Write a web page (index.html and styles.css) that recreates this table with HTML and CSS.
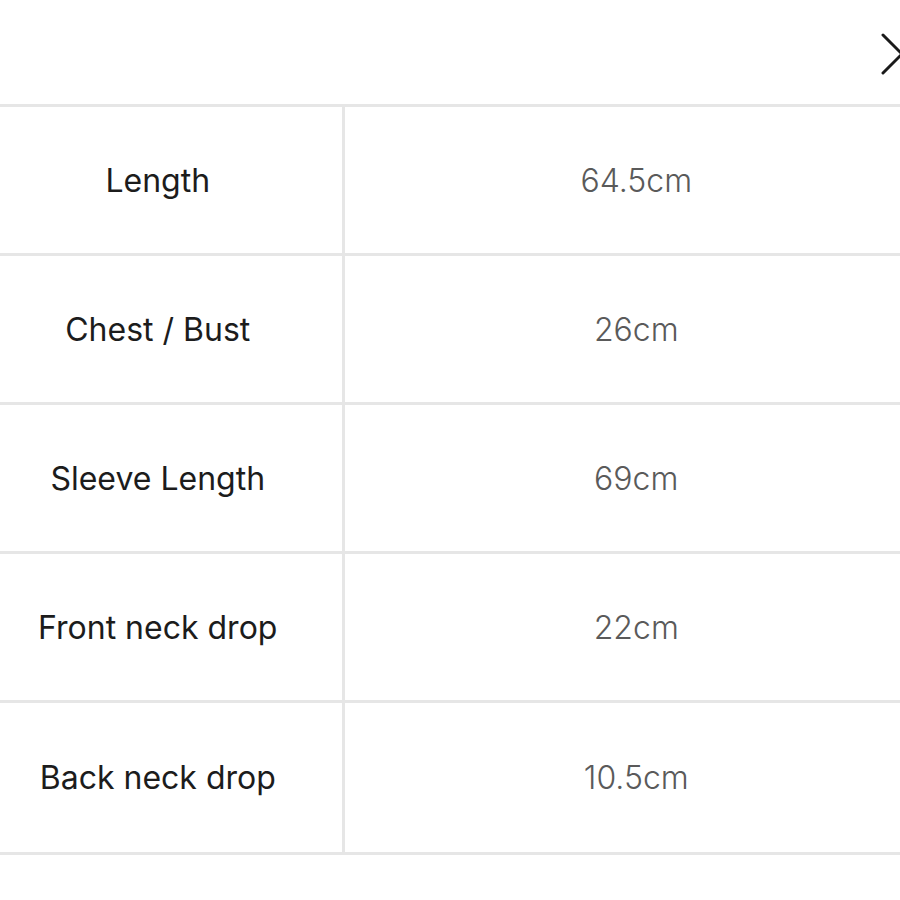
FILE: index.html
```html
<!DOCTYPE html>
<html lang="en">
<head>
    <meta charset="UTF-8">
    <meta name="viewport" content="width=device-width, initial-scale=1.0">
    <title>Size Chart</title>
    <link rel="stylesheet" href="styles.css">
</head>
<body>
    <div class="page">
        <div class="top-bar">
            <svg class="close-icon" width="30" height="44" viewBox="0 0 30 44">
                <path d="M2 2 L21 21 L2 40" fill="none" stroke="#1a1a1a" stroke-width="3" stroke-linecap="round" stroke-linejoin="round"/>
            </svg>
        </div>

        <table class="size-table">
            <tr>
                <td class="label">Length</td>
                <td class="value">64.5cm</td>
            </tr>
            <tr>
                <td class="label">Chest / Bust</td>
                <td class="value">26cm</td>
            </tr>
            <tr>
                <td class="label">Sleeve Length</td>
                <td class="value">69cm</td>
            </tr>
            <tr>
                <td class="label">Front neck drop</td>
                <td class="value">22cm</td>
            </tr>
            <tr class="last">
                <td class="label">Back neck drop</td>
                <td class="value">10.5cm</td>
            </tr>
        </table>
    </div>
</body>
</html>
```

FILE: styles.css
```css
/* Reset CSS */
* {
    margin: 0;
    padding: 0;
    box-sizing: border-box;
}

html, body {
    width: 900px;
    height: 900px;
    overflow: hidden;
    background-color: #fff;
}

body {
    font-family: Inter, "Noto Sans", sans-serif;
}

.page {
    width: 900px;
}

.top-bar {
    height: 104px;
    display: flex;
    justify-content: flex-end;
    padding-top: 33px;
}

.close-icon {
    display: block;
    margin-right: -11px;
}

.size-table {
    border-collapse: collapse;
    margin-left: -26px;
    width: 954px;
    table-layout: fixed;
}

.size-table td {
    border-top: 3px solid #e6e6e6;
    border-bottom: 3px solid #e6e6e6;
    height: 149px;
    text-align: center;
    vertical-align: middle;
    font-size: 32px;
}

.size-table tr.last td {
    height: 152px;
}

.label {
    width: 369px;
    color: #1c1c1c;
    border-right: 3px solid #e6e6e6;
    font-weight: 400;
}

.value {
    color: #5a5a5a;
    font-weight: 300;
}
```
